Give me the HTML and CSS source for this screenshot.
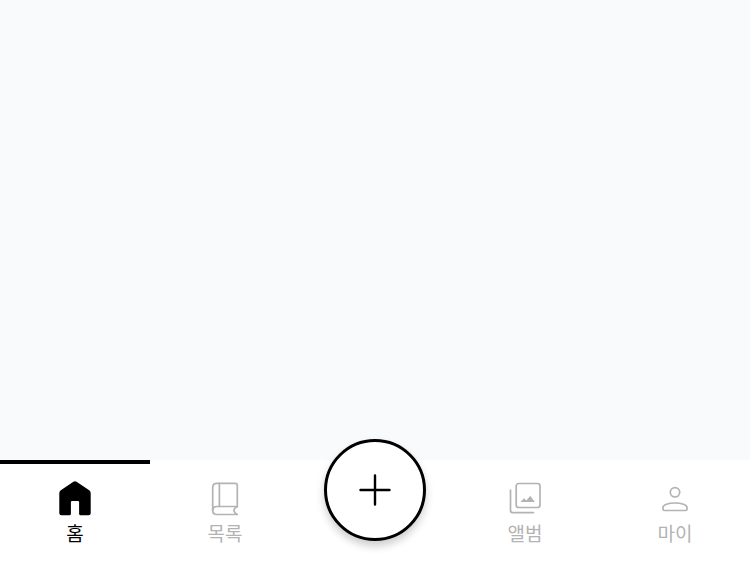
FILE: index.html
```html
<!DOCTYPE html>
<html lang="ko">
<head>
<meta charset="utf-8">
<meta name="viewport" content="width=device-width, initial-scale=1">
<title>홈</title>
<link rel="stylesheet" href="styles.css">
</head>
<body>
<main class="content"></main>
<nav class="tabbar">
  <a class="tab tab-active" href="#home" aria-current="page">
    <svg class="icon" viewBox="0 0 40 40" aria-hidden="true"><path fill="currentColor" d="M18.4 3.8 Q20 2.6 21.6 3.8 L34.2 12.3 Q35.7 13.4 35.7 15.2 V35.2 Q35.7 37.2 33.7 37.2 H25.6 Q24.1 37.2 24.1 35.7 V24 Q24.1 22.9 23 22.9 H17 Q15.9 22.9 15.9 24 V35.7 Q15.9 37.2 14.4 37.2 H6.3 Q4.3 37.2 4.3 35.2 V15.2 Q4.3 13.4 5.8 12.3 Z"/></svg>
    <span>홈</span>
  </a>
  <a class="tab" href="#list">
    <svg class="icon" viewBox="0 0 40 40" aria-hidden="true"><g class="line"><path d="M32.3 28.5 V7.3 Q32.3 5.3 30.3 5.3 H11.8 Q7.7 5.3 7.7 9.4 V32.5"/><path d="M14.4 5.3 V28.5"/><path d="M32.3 28.5 H11.7 Q7.7 28.5 7.7 32.5 Q7.7 36.5 11.7 36.5 H32.3 Q29 34.8 29 32.5 Q29 30.2 32.3 28.5"/></g></svg>
    <span>목록</span>
  </a>
  <div class="add-slot">
    <button class="add" type="button" aria-label="추가">
      <svg class="icon" viewBox="0 0 40 40" aria-hidden="true"><path d="M20 5.5 V34.5 M5.5 20 H34.5"/></svg>
    </button>
  </div>
  <a class="tab" href="#album">
    <svg class="icon" viewBox="0 0 40 40" aria-hidden="true"><g class="line"><rect x="11.2" y="5.5" width="23.8" height="24" rx="2.5"/><path d="M5.5 12 V32.6 Q5.5 34.6 7.5 34.6 H28.5"/></g><path fill="currentColor" d="M15.5 24 L19 20.3 L21.5 22.4 L25.2 17.8 L29.8 24 Z"/></svg>
    <span>앨범</span>
  </a>
  <a class="tab" href="#my">
    <svg class="icon" viewBox="0 0 40 40" aria-hidden="true"><g class="line"><circle cx="20" cy="14.3" r="4.7"/><path d="M8 31.2 V29.4 C8 27 13.3 25 20 25 S32 27 32 29.4 V31.2 Q32 32.5 30.7 32.5 H9.3 Q8 32.5 8 31.2 Z"/></g></svg>
    <span>마이</span>
  </a>
</nav>
</body>
</html>
```
FILE: styles.css
```css
* {
  box-sizing: border-box;
}

body {
  display: flex;
  flex-direction: column;
  min-height: 100vh;
  margin: 0;
  background: #f9fafc;
  font-family: "Noto Sans CJK KR", sans-serif;
}

.content {
  flex: 1;
}

.tabbar {
  display: grid;
  grid-template-columns: repeat(5, 1fr);
  background: #fff;
}

.tab {
  display: flex;
  flex-direction: column;
  align-items: center;
  gap: 3px;
  padding: 14px 0 17px;
  border-top: 4px solid transparent;
  color: #b3b3b3;
  font-size: 19px;
  line-height: 24px;
  text-decoration: none;
}

.tab-active {
  border-top-color: #000;
  color: #000;
}

.icon {
  display: block;
  width: 40px;
  height: 40px;
}

.line {
  fill: none;
  stroke: currentColor;
  stroke-width: 1.7;
  stroke-linejoin: round;
  stroke-linecap: round;
}

.add-slot {
  display: flex;
  align-items: flex-start;
  justify-content: center;
}

.add {
  display: grid;
  place-items: center;
  flex: none;
  width: 102px;
  height: 102px;
  margin-top: -21px;
  padding: 0;
  border: 3px solid #000;
  border-radius: 50%;
  background: #fff;
  box-shadow: 0 5px 8px rgba(0, 0, 0, 0.2);
}

.add path {
  fill: none;
  stroke: #000;
  stroke-width: 2.4;
  stroke-linecap: round;
}
```
